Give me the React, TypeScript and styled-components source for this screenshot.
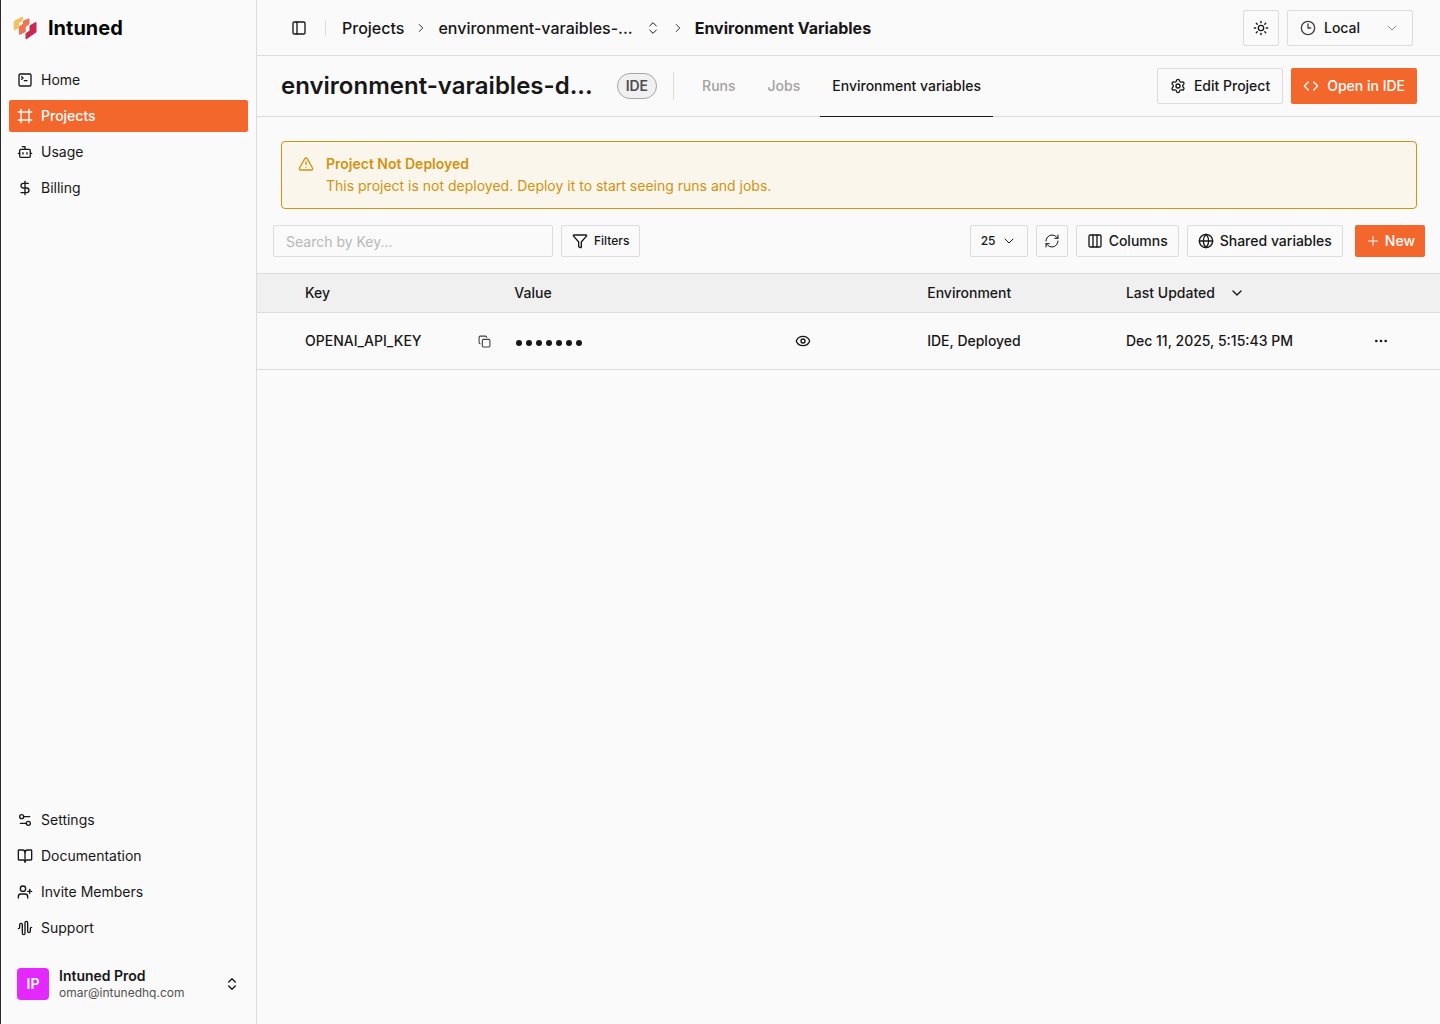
import React from "react";
import styled, { createGlobalStyle, css } from "styled-components";
import {
  AudioWaveform,
  BookOpen,
  Bot,
  ChevronDown,
  ChevronRight,
  ChevronsUpDown,
  Clock3,
  Code,
  Columns3,
  Copy,
  DollarSign,
  Ellipsis,
  Eye,
  Frame,
  Funnel,
  Globe,
  PanelLeft,
  Plus,
  RefreshCw,
  Settings,
  Settings2,
  SquareTerminal,
  Sun,
  TriangleAlert,
  UserPlus,
} from "lucide-react";

const color = {
  bg: "#fafafa",
  line: "#dcdcdc",
  text: "#171717",
  muted: "#a1a1a1",
  accent: "#f4672c",
  warn: "#d2930f",
};

const GlobalStyle = createGlobalStyle`
  *, *::before, *::after { box-sizing: border-box; }
  body {
    margin: 0;
    background: ${color.bg};
    color: ${color.text};
    font-family: Inter, "Liberation Sans", sans-serif;
    font-size: 14px;
    line-height: 20px;
  }
  button, input, select { font: inherit; color: inherit; }
  button { cursor: pointer; }
  a { color: inherit; text-decoration: none; }
  svg { flex: none; display: block; }
`;

const Shell = styled.div`
  display: flex;
  min-height: 100vh;
  border-left: 1px solid #2b2b2e;
`;

const Sidebar = styled.aside`
  display: flex;
  flex-direction: column;
  flex: none;
  width: 256px;
  padding: 12px 8px 16px;
  border-right: 1px solid ${color.line};
`;

const Brand = styled.a`
  display: flex;
  align-items: center;
  gap: 11px;
  height: 32px;
  padding: 0 4px;
  margin-bottom: 20px;
  font-size: 20px;
  line-height: 28px;
  font-weight: 700;
  color: #050505;
`;

const NavList = styled.nav`
  display: flex;
  flex-direction: column;
  gap: 4px;
`;

const BottomNav = styled(NavList)`
  margin-top: auto;
`;

const NavItem = styled.a<{ $active?: boolean }>`
  display: flex;
  align-items: center;
  gap: 8px;
  height: 32px;
  padding: 0 8px;
  border-radius: 2px;
  ${(p) =>
    p.$active &&
    css`
      background: ${color.accent};
      color: #fff;
      font-weight: 500;
    `}
`;

const Account = styled.button`
  display: flex;
  align-items: center;
  gap: 10px;
  height: 48px;
  margin-top: 16px;
  padding: 0 8px;
  border: 0;
  background: none;
  text-align: left;
`;

const Avatar = styled.span`
  display: grid;
  place-items: center;
  width: 32px;
  height: 32px;
  border-radius: 4px;
  background: #e429ff;
  color: #fff;
  font-weight: 600;
`;

const AccountText = styled.span`
  display: flex;
  flex-direction: column;
  flex: 1;
`;

const AccountName = styled.span`
  font-weight: 600;
  line-height: 18px;
`;

const AccountMail = styled.span`
  font-size: 12px;
  line-height: 16px;
  color: #525252;
`;

const Main = styled.main`
  flex: 1;
  min-width: 0;
`;

const TopBar = styled.header`
  display: flex;
  align-items: center;
  gap: 8px;
  height: 56px;
  padding: 0 27px 0 28px;
  border-bottom: 1px solid ${color.line};
`;

const SidebarToggle = styled.div`
  display: flex;
  align-items: center;
  gap: 12px;
`;

const GhostButton = styled.button`
  display: grid;
  place-items: center;
  min-width: 28px;
  height: 28px;
  padding: 0;
  border: 0;
  background: none;
`;

const Rule = styled.span<{ $h: number }>`
  flex: none;
  width: 1px;
  height: ${(p) => p.$h}px;
  background: ${color.line};
`;

const Crumbs = styled.nav`
  display: flex;
  align-items: center;
  gap: 10px;
  flex: 1;
  padding-left: 8px;
  font-size: 16px;
  line-height: 24px;
  font-weight: 500;
`;

const Current = styled.span`
  font-weight: 700;
`;

const CrumbPicker = styled.button`
  display: flex;
  align-items: center;
  gap: 12px;
  padding: 0;
  border: 0;
  background: none;
`;

const Button = styled.button<{ $primary?: boolean; $size?: "sm" | "md"; $small?: boolean }>`
  display: inline-flex;
  align-items: center;
  justify-content: center;
  gap: ${(p) => (p.$size === "md" ? 8 : p.$primary ? 4 : 6)}px;
  height: ${(p) => (p.$size === "md" ? 36 : 32)}px;
  padding: 0 ${(p) => (p.$size === "md" ? 12 : 10)}px;
  border: ${(p) => (p.$primary ? "0" : `1px solid ${color.line}`)};
  border-radius: 2px;
  background: ${(p) => (p.$primary ? color.accent : "transparent")};
  color: ${(p) => (p.$primary ? "#fff" : color.text)};
  font-size: ${(p) => (p.$small ? 12 : 14)}px;
  font-weight: 500;
  white-space: nowrap;
`;

const IconButton = styled(Button)`
  width: ${(p) => (p.$size === "md" ? 36 : 32)}px;
  padding: 0;
`;

const SelectBox = styled.label<{ $w: number; $size?: "sm" | "md" }>`
  display: grid;
  grid-template-columns: auto 1fr auto;
  align-items: center;
  width: ${(p) => p.$w}px;
  height: ${(p) => (p.$size === "md" ? 36 : 32)}px;
  border: 1px solid ${color.line};
  border-radius: 2px;

  > svg { grid-row: 1; pointer-events: none; }
  > svg:first-child { grid-column: 1; margin-left: 12px; }
  > svg:last-child { grid-column: 3; margin-right: ${(p) => (p.$size === "md" ? 12 : 10)}px; }
`;

const Select = styled.select<{ $inset: number; $small?: boolean }>`
  grid-row: 1;
  grid-column: 1 / -1;
  height: 100%;
  padding: 0 0 0 ${(p) => p.$inset}px;
  appearance: none;
  border: 0;
  background: none;
  font-size: ${(p) => (p.$small ? 12 : 14)}px;
  font-weight: 500;
`;

const ProjectBar = styled.section`
  display: flex;
  align-items: center;
  height: 61px;
  padding: 0 23px 0 24px;
  border-bottom: 1px solid ${color.line};
`;

const Title = styled.h1`
  margin: 0 24px 0 0;
  font-size: 24px;
  line-height: 32px;
  font-weight: 600;
`;

const Badge = styled.span`
  padding: 1px 8px;
  margin-right: 16px;
  border: 1px solid #a6a6a6;
  border-radius: 13px;
  background: #f0f0f0;
  color: #4d4d4d;
  font-weight: 600;
  line-height: 22px;
`;

const Tabs = styled.nav`
  display: flex;
  flex: 1;
  align-self: stretch;
  gap: 8px;
  margin: 0 0 -1px 16px;
`;

const Tab = styled.a<{ $active?: boolean }>`
  display: flex;
  align-items: center;
  padding: 0 12px;
  border-bottom: 1px solid ${(p) => (p.$active ? color.text : "transparent")};
  color: ${(p) => (p.$active ? color.text : color.muted)};
  font-weight: 500;
`;

const Actions = styled.div`
  display: flex;
  gap: 8px;
`;

const Notice = styled.section`
  display: flex;
  gap: 12px;
  margin: 24px 23px 16px 24px;
  padding: 11px 16px;
  border: 1px solid ${color.warn};
  border-radius: 4px;
  background: #faf6ec;
  color: ${color.warn};
  line-height: 22px;

  svg { margin-top: 3px; }
`;

const NoticeTitle = styled.h2`
  margin: 0;
  font-size: 14px;
  line-height: 22px;
  font-weight: 600;
`;

const NoticeText = styled.p`
  margin: 0;
`;

const Toolbar = styled.div`
  display: flex;
  align-items: center;
  gap: 8px;
  padding: 0 15px 16px 16px;
`;

const Search = styled.input`
  width: 280px;
  height: 32px;
  padding: 0 12px;
  border: 1px solid ${color.line};
  border-radius: 2px;
  background: none;

  &::placeholder { color: #b8b8b8; opacity: 1; }
`;

const Spacer = styled.span`
  flex: 1;
`;

const NewSlot = styled.div`
  display: flex;
  margin-left: 4px;
`;

const Table = styled.table`
  width: 100%;
  border-collapse: collapse;
  table-layout: fixed;
`;

const Col = styled.col<{ $w?: number }>`
  width: ${(p) => (p.$w ? `${p.$w}%` : "auto")};
`;

const HeadRow = styled.tr`
  height: 39px;
  background: #f0f0f0;
  border-top: 1px solid ${color.line};
  border-bottom: 1px solid ${color.line};
`;

const Row = styled.tr`
  height: 57px;
  border-bottom: 1px solid ${color.line};
`;

const Th = styled.th<{ $first?: boolean }>`
  padding: 0 0 0 ${(p) => (p.$first ? 48 : 16)}px;
  text-align: left;
  font-weight: 500;
`;

const Td = styled.td<{ $first?: boolean }>`
  padding: 0 0 0 ${(p) => (p.$first ? 48 : 16)}px;
  font-weight: 500;
`;

const ActionTd = styled(Td)`
  padding-left: 20px;
`;

const Cell = styled.div<{ $end?: number }>`
  display: flex;
  align-items: center;
  justify-content: space-between;
  padding-right: ${(p) => p.$end || 0}px;
`;

const SortButton = styled.button`
  display: flex;
  align-items: center;
  gap: 14px;
  padding: 0;
  border: 0;
  background: none;
  font-weight: 500;
`;

const Secret = styled.span`
  display: flex;
  gap: 4px;
  padding: 3px 0 0 2px;
`;

const Dot = styled.span`
  width: 6px;
  height: 6px;
  border-radius: 50%;
  background: ${color.text};
`;

function Logo() {
  return (
    <svg width="24" height="24" viewBox="0 0 24 24" aria-hidden="true" strokeLinejoin="round" strokeWidth="1">
      <path d="M1.2 5.3 9.3 1v3.500L5.500 7v5L1.200 13.800z" fill="#f2c163" stroke="#f2c163" />
      <path d="M6.500 10.500l4-2.500V5L16 2.800V8l-3.800 2.700v5L6.500 18.500z" fill="#ee7551" stroke="#ee7551" />
      <path d="M17 9.800 23 6.300v9.700L13 23v-5.500l4-2.700z" fill="#cb2850" stroke="#cb2850" />
    </svg>
  );
}

const mainNav = [
  { label: "Home", Icon: SquareTerminal },
  { label: "Projects", Icon: Frame, active: true },
  { label: "Usage", Icon: Bot },
  { label: "Billing", Icon: DollarSign },
];

const helpNav = [
  { label: "Settings", Icon: Settings2 },
  { label: "Documentation", Icon: BookOpen },
  { label: "Invite Members", Icon: UserPlus },
  { label: "Support", Icon: AudioWaveform },
];

export default function App() {
  return (
    <>
      <GlobalStyle />
      <Shell>
        <Sidebar>
          <Brand href="#">
            <Logo />
            Intuned
          </Brand>
          <NavList aria-label="Main">
            {mainNav.map(({ label, Icon, active }) => (
              <NavItem key={label} href="#" $active={active}>
                <Icon size={16} />
                {label}
              </NavItem>
            ))}
          </NavList>
          <BottomNav aria-label="Help">
            {helpNav.map(({ label, Icon }) => (
              <NavItem key={label} href="#">
                <Icon size={16} />
                {label}
              </NavItem>
            ))}
          </BottomNav>
          <Account>
            <Avatar>IP</Avatar>
            <AccountText>
              <AccountName>Intuned Prod</AccountName>
              <AccountMail>omar@intunedhq.com</AccountMail>
            </AccountText>
            <ChevronsUpDown size={16} />
          </Account>
        </Sidebar>

        <Main>
          <TopBar>
            <SidebarToggle>
              <GhostButton aria-label="Toggle sidebar">
                <PanelLeft size={16} />
              </GhostButton>
              <Rule $h={16} />
            </SidebarToggle>
            <Crumbs aria-label="Breadcrumb">
              <a href="#">Projects</a>
              <ChevronRight size={14} strokeWidth={1.5} />
              <CrumbPicker>
                environment-varaibles-...
                <ChevronsUpDown size={16} strokeWidth={1.5} />
              </CrumbPicker>
              <ChevronRight size={14} strokeWidth={1.5} />
              <Current>Environment Variables</Current>
            </Crumbs>
            <IconButton $size="md" aria-label="Theme">
              <Sun size={16} />
            </IconButton>
            <SelectBox $w={126} $size="md">
              <Clock3 size={16} color="#404040" />
              <Select $inset={36} aria-label="Time zone">
                <option>Local</option>
              </Select>
              <ChevronDown size={16} color="#8a8a8a" strokeWidth={1.5} />
            </SelectBox>
          </TopBar>

          <ProjectBar>
            <Title>environment-varaibles-d...</Title>
            <Badge>IDE</Badge>
            <Rule $h={28} />
            <Tabs aria-label="Project">
              <Tab href="#">Runs</Tab>
              <Tab href="#">Jobs</Tab>
              <Tab href="#" $active>
                Environment variables
              </Tab>
            </Tabs>
            <Actions>
              <Button $size="md">
                <Settings size={16} />
                Edit Project
              </Button>
              <Button $size="md" $primary>
                <Code size={16} />
                Open in IDE
              </Button>
            </Actions>
          </ProjectBar>

          <Notice>
            <TriangleAlert size={16} />
            <div>
              <NoticeTitle>Project Not Deployed</NoticeTitle>
              <NoticeText>This project is not deployed. Deploy it to start seeing runs and jobs.</NoticeText>
            </div>
          </Notice>

          <Toolbar>
            <Search aria-label="Search by key" placeholder="Search by Key..." />
            <Button $small>
              <Funnel size={16} />
              Filters
            </Button>
            <Spacer />
            <SelectBox $w={58}>
              <Select $inset={10} $small aria-label="Rows per page">
                <option>25</option>
              </Select>
              <ChevronDown size={16} strokeWidth={1.5} />
            </SelectBox>
            <IconButton aria-label="Refresh">
              <RefreshCw size={16} strokeWidth={1.5} />
            </IconButton>
            <Button>
              <Columns3 size={16} />
              Columns
            </Button>
            <Button>
              <Globe size={16} />
              Shared variables
            </Button>
            <NewSlot>
              <Button $primary>
                <Plus size={16} strokeWidth={1.5} />
                New
              </Button>
            </NewSlot>
          </Toolbar>

          <Table>
            <colgroup>
              <Col $w={20.4} />
              <Col $w={34.9} />
              <Col $w={16.8} />
              <Col $w={20} />
              <Col />
            </colgroup>
            <thead>
              <HeadRow>
                <Th $first>Key</Th>
                <Th>Value</Th>
                <Th>Environment</Th>
                <Th>
                  <SortButton>
                    Last Updated
                    <ChevronDown size={16} />
                  </SortButton>
                </Th>
                <Th aria-label="Actions" />
              </HeadRow>
            </thead>
            <tbody>
              <Row>
                <Td $first>
                  <Cell>
                    OPENAI_API_KEY
                    <GhostButton aria-label="Copy key">
                      <Copy size={13} strokeWidth={2} color="#404040" />
                    </GhostButton>
                  </Cell>
                </Td>
                <Td>
                  <Cell $end={94}>
                    <Secret aria-label="Hidden value">
                      {Array.from({ length: 7 }, (_, i) => (
                        <Dot key={i} />
                      ))}
                    </Secret>
                    <GhostButton aria-label="Show value">
                      <Eye size={16} />
                    </GhostButton>
                  </Cell>
                </Td>
                <Td>IDE, Deployed</Td>
                <Td>Dec 11, 2025, 5:15:43 PM</Td>
                <ActionTd>
                  <GhostButton aria-label="More">
                    <Ellipsis size={16} />
                  </GhostButton>
                </ActionTd>
              </Row>
            </tbody>
          </Table>
        </Main>
      </Shell>
    </>
  );
}
